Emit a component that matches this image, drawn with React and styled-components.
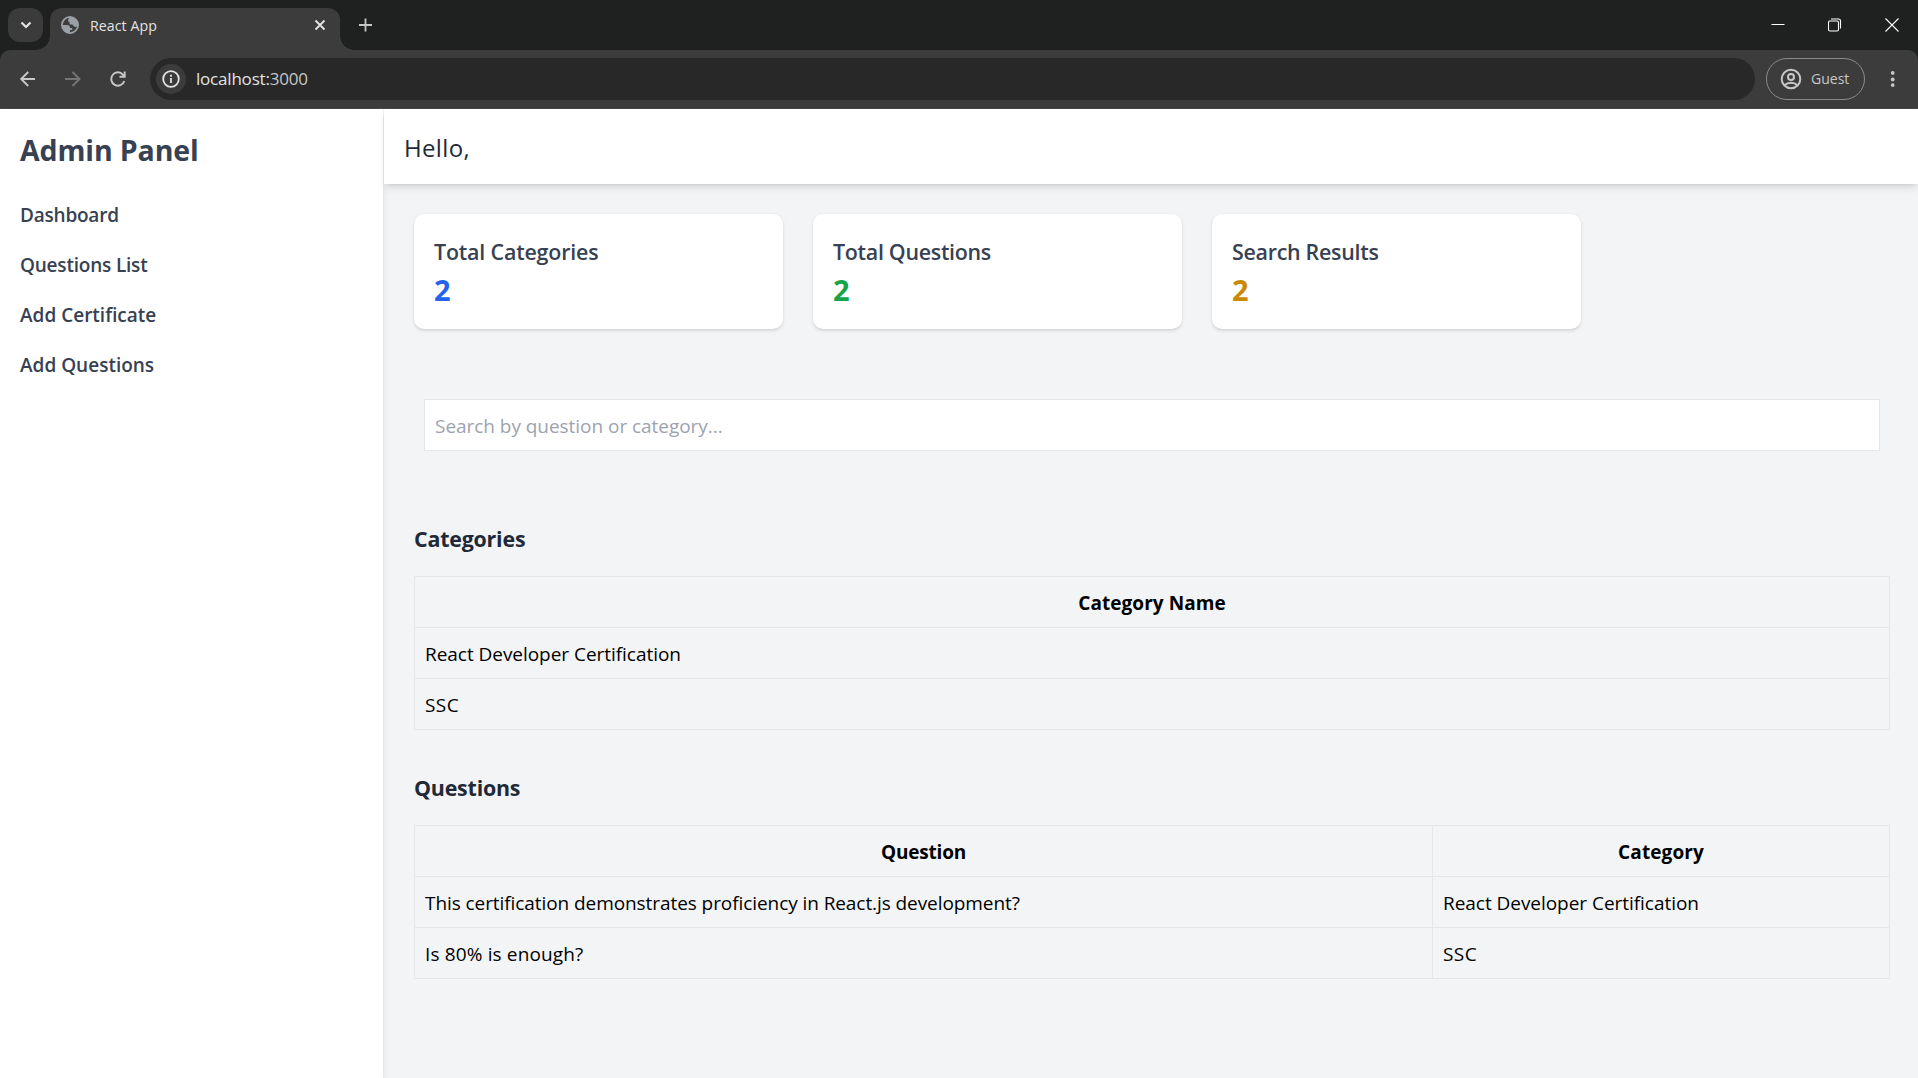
import React from "react";
import styled, { createGlobalStyle } from "styled-components";

const GlobalStyle = createGlobalStyle`
  * { box-sizing: border-box; }
  html, body, #root { height: 100%; }
  body {
    margin: 0;
    overflow: hidden;
    font-family: "Open Sans", "Noto Sans", sans-serif;
    color: #000;
  }
`;

const Browser = styled.div`
  display: flex;
  flex-direction: column;
  height: 1078px;
  width: 1918px;
  background: #1f2120;
`;

const TabStrip = styled.div`
  display: flex;
  height: 50px;
  padding: 8px 19px 0 8px;
`;

const TabSearch = styled.button`
  display: grid;
  place-items: center;
  width: 35px;
  height: 34px;
  margin-right: 7px;
  padding: 0;
  border: 0;
  border-radius: 12px;
  background: #3b3b3b;
`;

const Tab = styled.div`
  position: relative;
  display: flex;
  align-items: center;
  width: 290px;
  height: 42px;
  padding: 0 13px 8px 11px;
  border-radius: 12px 12px 0 0;
  background: #3c3c3c;

  &::before,
  &::after {
    content: "";
    position: absolute;
    bottom: 0;
    width: 14px;
    height: 14px;
  }
  &::before {
    left: -14px;
    background: radial-gradient(circle at 0 0, transparent 13.5px, #3c3c3c 14px);
  }
  &::after {
    right: -14px;
    background: radial-gradient(circle at 100% 0, transparent 13.5px, #3c3c3c 14px);
  }
`;

const TabTitle = styled.span`
  flex: 1;
  margin-left: 11px;
  padding-top: 1px;
  color: #e3e3e3;
  font-size: 14.2px;
  line-height: 20px;
  letter-spacing: 0.05px;
`;

const NewTab = styled.div`
  display: grid;
  place-items: center;
  width: 30px;
  height: 34px;
  margin-left: 10px;
`;

const WindowControls = styled.div`
  display: flex;
  align-items: center;
  gap: 43px;
  height: 34px;
  margin-left: auto;
`;

const Toolbar = styled.div`
  display: flex;
  align-items: center;
  height: 59px;
  padding: 0 17px 1px 16px;
  border-bottom: 1px solid #474646;
  border-radius: 10px 10px 0 0;
  background: #3c3c3c;
`;

const NavButtons = styled.div`
  display: flex;
  gap: 21px;
  width: 134px;
`;

const AddressBar = styled.div`
  display: flex;
  align-items: center;
  flex: 1;
  height: 42px;
  padding-left: 6px;
  border-radius: 21px;
  background: #282828;
`;

const SiteInfo = styled.div`
  display: grid;
  place-items: center;
  width: 30px;
  height: 30px;
  border-radius: 50%;
  background: #3c3c3c;
`;

const Address = styled.span`
  margin-left: 10px;
  padding-top: 1px;
  color: #e3e3e3;
  font-size: 17px;
  line-height: 24px;
  letter-spacing: -0.2px;
  span { color: #c7c7c7; }
`;

const Profile = styled.div`
  display: flex;
  align-items: center;
  gap: 8px;
  width: 99px;
  height: 42px;
  margin: 0 20px 0 11px;
  padding-left: 12px;
  border: 1px solid #8b8b8b;
  border-radius: 21px;
  color: #c7c7c7;
  font-size: 14px;
`;

const Page = styled.div`
  display: flex;
  flex: 1;
  min-height: 0;
  background: #f3f4f6;
`;

const Sidebar = styled.aside`
  width: 383px;
  margin-right: 1px;
  padding: 21px 20px 20px;
  background: #fff;
  box-shadow: 0 5px 7.5px -1.25px rgba(0, 0, 0, 0.1), 0 2.5px 5px -2.5px rgba(0, 0, 0, 0.1);
`;

const Brand = styled.h1`
  margin: 0 0 30px;
  color: #374151;
  font-size: 28.5px;
  font-weight: 700;
  line-height: 40px;
  letter-spacing: -0.12px;
`;

const Menu = styled.nav`
  display: flex;
  flex-direction: column;
  gap: 20px;
`;

const MenuItem = styled.a`
  color: #374151;
  font-size: 19px;
  font-weight: 600;
  line-height: 30px;
  letter-spacing: ${(p) => p.$track || 0}px;
`;

const Main = styled.main`
  display: flex;
  flex-direction: column;
  flex: 1;
`;

const Header = styled.header`
  padding: 21px 20px 19px;
  background: #fff;
  box-shadow: 0 5px 7.5px -1.25px rgba(0, 0, 0, 0.1), 0 2.5px 5px -2.5px rgba(0, 0, 0, 0.1);
`;

const Greeting = styled.h2`
  margin: 0;
  color: #1f2937;
  font-size: 24px;
  font-weight: 500;
  line-height: 35px;
  letter-spacing: 0.35px;
`;

const Content = styled.div`
  padding: 30px 28px 30px 30px;
`;

const Stats = styled.div`
  display: flex;
  gap: 30px;
`;

const StatCard = styled.div`
  width: 369px;
  height: 115px;
  padding: 20px;
  border-radius: 10px;
  background: #fff;
  box-shadow: 0 1.25px 3.75px rgba(0, 0, 0, 0.1), 0 1.25px 2.5px -1.25px rgba(0, 0, 0, 0.1);
`;

const StatLabel = styled.h3`
  margin: 0;
  color: #374151;
  font-size: 21.4px;
  font-weight: 600;
  line-height: 35px;
  letter-spacing: ${(p) => p.$track || 0}px;
`;

const StatValue = styled.p`
  margin: 1px 0 0;
  color: ${(p) => p.$color};
  font-size: 29px;
  font-weight: 700;
  line-height: 40px;
`;

const Search = styled.input`
  display: block;
  width: calc(100% - 20px);
  height: 52px;
  margin: 70px 10px;
  padding: 11px 10px 9px;
  border: 1px solid #e5e7eb;
  background: #fff;
  font-family: inherit;
  font-size: 19px;
  line-height: 30px;
  letter-spacing: -0.04px;
  &::placeholder { color: #9ca3af; opacity: 1; }
`;

const Section = styled.section`
  margin-bottom: 40px;
`;

const SectionTitle = styled.h3`
  margin: 0 0 20px;
  color: #1f2937;
  font-size: 21.4px;
  font-weight: 700;
  line-height: 35px;
  letter-spacing: -0.2px;
`;

const Table = styled.div`
  display: grid;
  grid-template-columns: ${(p) => p.$columns};
  border: solid #e5e7eb;
  border-width: 1px 0 0 1px;
`;

const Cell = styled.div`
  height: 51px;
  padding: 11px 10px 9px;
  border: solid #e5e7eb;
  border-width: 0 1px 1px 0;
  font-size: 19px;
  line-height: 30px;
  letter-spacing: ${(p) => p.$track || 0}px;
`;

const HeadCell = styled(Cell)`
  font-weight: 700;
  text-align: center;
`;

const Icon = ({ size, box = size, children, ...rest }) => (
  <svg width={size} height={size} viewBox={`0 0 ${box} ${box}`} fill="none" {...rest}>
    {children}
  </svg>
);

const menu = [
  ["Dashboard", -0.22],
  ["Questions List", -0.2],
  ["Add Certificate", 0],
  ["Add Questions", 0],
];

const stats = [
  ["Total Categories", "#2563eb", -0.17],
  ["Total Questions", "#16a34a", -0.28],
  ["Search Results", "#ca8a04", -0.27],
];

const categories = [
  ["React Developer Certification", -0.04],
  ["SSC", 0.4],
];

const questions = [
  ["This certification demonstrates proficiency in React.js development?", -0.075, categories[0]],
  ["Is 80% is enough?", 0.14, categories[1]],
];

export default function App() {
  return (
    <Browser>
      <GlobalStyle />
      <TabStrip>
        <TabSearch>
          <Icon size={12} stroke="#e3e3e3" strokeWidth="2.2"><path d="M1.5 3.5 6 8l4.500-4.500" /></Icon>
        </TabSearch>
        <Tab>
          <Icon size={18} box={20}>
            <circle cx="10" cy="10" r="9" stroke="#9aa0a6" strokeWidth="2" />
            <path fill="#9aa0a6" d="M1 10h5.500c2.500 0 3.500 1.300 3.500 3.300h2.500v2.200h-2.500v3.500H9C4 18.500 1 14.500 1 10zM11 1c5 .3 8 4 8 9-.8 2-2.500 2.500-4 2-1.200-.4-1.200-2-2.500-2.500h-3V6.500H8V4.500c0-1.500 1.500-3.500 3-3.500z" />
          </Icon>
          <TabTitle>React App</TabTitle>
          <Icon size={14} stroke="#e3e3e3" strokeWidth="1.9"><path d="M2.500 2.500l9 9M11.500 2.500l-9 9" /></Icon>
        </Tab>
        <NewTab>
          <Icon size={14} stroke="#c7c7c7" strokeWidth="1.8"><path d="M7.500 .5v13M1 7h13" /></Icon>
        </NewTab>
        <WindowControls>
          <Icon size={14} stroke="#fff" strokeWidth="1"><path d="M.5 6.500h13" /></Icon>
          <Icon size={14} stroke="#fff" strokeWidth="1.1">
            <rect x=".5" y="3" width="10" height="10" rx="1.500" />
            <path d="M3 1h7.500a2 2 0 0 1 2 2v7.500" />
          </Icon>
          <Icon size={14} stroke="#fff" strokeWidth="1.1"><path d="M.5.5l13 13M13.500.5l-13 13" /></Icon>
        </WindowControls>
      </TabStrip>

      <Toolbar>
        <NavButtons>
          <Icon size={24} stroke="#c7c7c7" strokeWidth="1.9"><path d="M19 12H5.500M12.200 5 5.200 12l7 7" /></Icon>
          <Icon size={24} stroke="#757575" strokeWidth="1.9"><path d="M4 12h14M11.500 5l7 7-7 7" /></Icon>
          <Icon size={24} stroke="#c7c7c7" strokeWidth="1.9">
            <path d="M18.300 14a6.700 6.700 0 1 1-1.200-6.200l1.400 1.700M18.700 4.500v5.200h-5.200" />
          </Icon>
        </NavButtons>
        <AddressBar>
          <SiteInfo>
            <Icon size={18} stroke="#e3e3e3" strokeWidth="1.8">
              <circle cx="9" cy="9" r="7.800" />
              <path d="M9 8v5M9 4.800v1.900" />
            </Icon>
          </SiteInfo>
          <Address>localhost:<span>3000</span></Address>
        </AddressBar>
        <Profile>
          <Icon size={24} stroke="#c7c7c7" strokeWidth="2">
            <circle cx="12" cy="12" r="9.300" />
            <circle cx="12" cy="10" r="3" />
            <path d="M5.500 18.200c3.500-3.300 9.500-3.300 13 0" />
          </Icon>
          <span>Guest</span>
        </Profile>
        <Icon size={16} fill="#c7c7c7">
          <circle cx="7.700" cy="1.900" r="1.900" /><circle cx="7.700" cy="8.500" r="1.900" /><circle cx="7.700" cy="14.100" r="1.900" />
        </Icon>
      </Toolbar>

      <Page>
        <Sidebar>
          <Brand>Admin Panel</Brand>
          <Menu>
            {menu.map(([label, track]) => <MenuItem key={label} $track={track}>{label}</MenuItem>)}
          </Menu>
        </Sidebar>
        <Main>
          <Header><Greeting>Hello,</Greeting></Header>
          <Content>
            <Stats>
              {stats.map(([label, color, track]) => (
                <StatCard key={label}>
                  <StatLabel $track={track}>{label}</StatLabel>
                  <StatValue $color={color}>2</StatValue>
                </StatCard>
              ))}
            </Stats>
            <Search placeholder="Search by question or category..." />
            <Section>
              <SectionTitle>Categories</SectionTitle>
              <Table $columns="1fr">
                <HeadCell $track={0.05}>Category Name</HeadCell>
                {categories.map(([name, track]) => <Cell key={name} $track={track}>{name}</Cell>)}
              </Table>
            </Section>
            <Section>
              <SectionTitle>Questions</SectionTitle>
              <Table $columns="1018px 1fr">
                <HeadCell $track={-0.2}>Question</HeadCell>
                <HeadCell $track={0.1}>Category</HeadCell>
                {questions.flatMap(([question, track, [category, categoryTrack]]) => [
                  <Cell key={question} $track={track}>{question}</Cell>,
                  <Cell key={category} $track={categoryTrack}>{category}</Cell>,
                ])}
              </Table>
            </Section>
          </Content>
        </Main>
      </Page>
    </Browser>
  );
}
